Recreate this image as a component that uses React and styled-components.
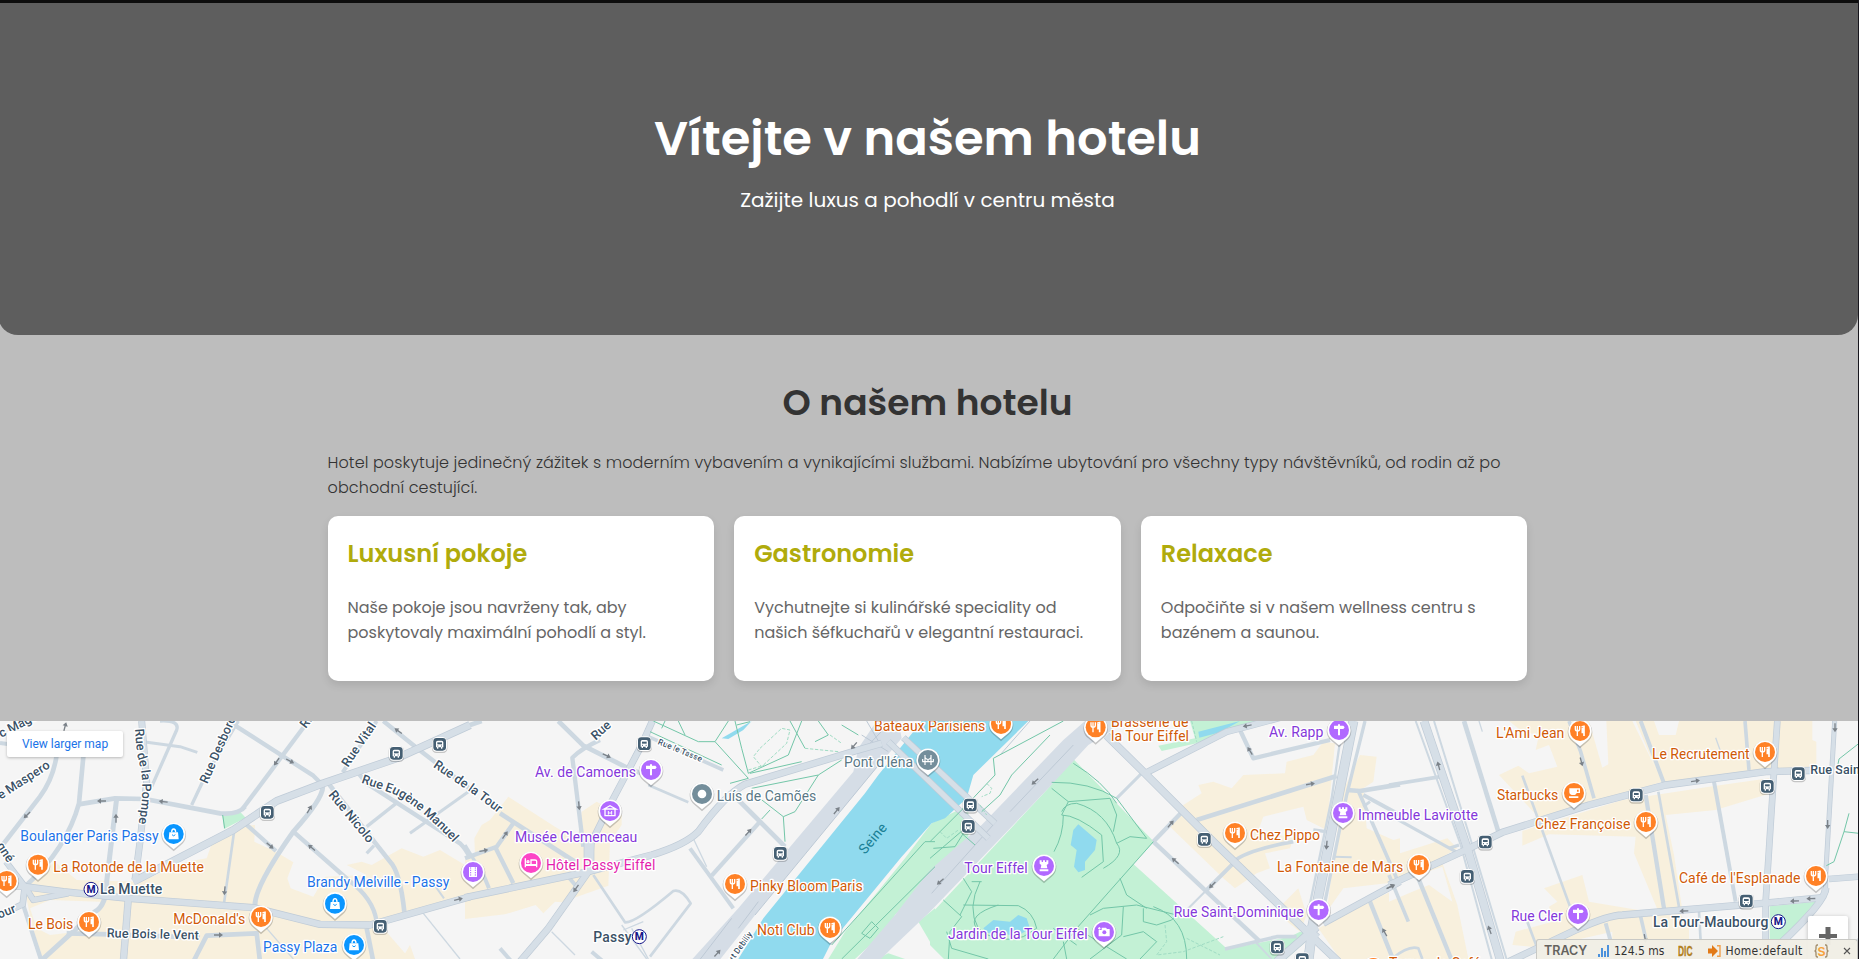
import React from "react";
import styled, { createGlobalStyle } from "styled-components";

const GlobalStyle = createGlobalStyle`
  * { box-sizing: border-box; }
  html, body { margin: 0; height: 959px; overflow: hidden; background: #17161d; }
  body { font-family: Poppins, Inter, sans-serif; color: #333; }
  h1, h2, h3, p { margin: 0; }
`;

const Page = styled.div`
  width: 1858px;
  height: 959px;
  overflow: hidden;
  background: #bdbdbd;
  border-top: 3px solid #0d0d0d;
  position: relative;
`;

const Hero = styled.header`
  width: 1860px;
  height: 332px;
  margin-left: -2.5px;
  padding-top: 100px;
  border-radius: 0 0 20px 20px;
  background: #5e5e5e;
  color: #fff;
  text-align: center;
`;

const HeroTitle = styled.h1`
  font-size: 48px;
  font-weight: 600;
  line-height: 72px;
`;

const HeroText = styled.p`
  margin-top: 10px;
  font-size: 20px;
  line-height: 30px;
`;

const About = styled.section`
  width: 1200px;
  height: 386px;
  margin: 0 auto 0 327.5px;
  padding-top: 40px;
`;

const AboutTitle = styled.h2`
  font-size: 36px;
  font-weight: 600;
  line-height: 56px;
  text-align: center;
`;

const AboutText = styled.p`
  margin-top: 19px;
  font-size: 16px;
  font-weight: 300;
  line-height: 25.3px;
  letter-spacing: 0.105px;
  white-space: nowrap;
`;

const CardGrid = styled.div`
  display: grid;
  grid-template-columns: repeat(3, 1fr);
  gap: 20px;
  margin-top: 15px;
`;

const Card = styled.article`
  height: 165px;
  padding: 20px;
  border-radius: 10px;
  background: #fff;
  box-shadow: 0 4px 8px rgba(0, 0, 0, 0.1);
`;

const CardTitle = styled.h3`
  font-size: 24px;
  font-weight: 600;
  line-height: 36px;
  color: #b0ab0c;
`;

const CardLine = styled.span`
  display: block;
`;

const CardText = styled.p`
  margin-top: 23px;
  font-size: 16px;
  line-height: 25px;
  color: #666;
  white-space: nowrap;
`;

const MapFrame = styled.section`
  position: relative;
  height: 238px;
  overflow: hidden;
  background: #f5f5f5;
`;

const MapCanvas = styled.svg`
  display: block;
  font-family: Roboto, sans-serif;
`;

const LargerMap = styled.a`
  position: absolute;
  left: 7px;
  top: 10px;
  width: 116px;
  height: 26px;
  border-radius: 2px;
  background: #fff;
  box-shadow: 0 1px 3px rgba(0, 0, 0, 0.25);
  color: #1a73e8;
  font: 12px/26px Roboto, sans-serif;
  text-align: center;
`;

const ZoomIn = styled.button`
  position: absolute;
  right: 10px;
  top: 195px;
  display: flex;
  align-items: flex-start;
  width: 40px;
  height: 60px;
  padding: 11px 0 0 11px;
  border: 0;
  border-radius: 2px;
  background: #fff;
  box-shadow: 0 1px 4px rgba(0, 0, 0, 0.25);
`;

const TracyBar = styled.aside`
  position: absolute;
  right: 0;
  bottom: 0;
  display: flex;
  align-items: center;
  width: 322px;
  height: 20px;
  padding: 2px 0 0 7px;
  border: 1px solid #c9c9c5;
  border-bottom: 0;
  border-radius: 3px 3px 0 0;
  background: rgba(240, 238, 229, 0.96);
  color: #333;
  font: 12px/16px "DejaVu Sans Condensed", "DejaVu Sans", sans-serif;
  white-space: nowrap;
`;

const TracyItem = styled.span`
  display: flex;
  align-items: center;
  gap: 4px;
  width: ${(p) => p.$width}px;
  letter-spacing: ${(p) => p.$track || 0}px;
`;

const TracyLogo = styled(TracyItem)`
  color: #65635e;
  font: 600 12.5px/16px Inter, sans-serif;
`;

const TracyBadge = styled(TracyItem)`
  color: #b3811f;
  font: 700 15px/16px "Liberation Sans", sans-serif;

  b {
    transform: scaleX(0.56);
    transform-origin: left;
    -webkit-text-stroke: 0.4px #b3811f;
  }
`;

const cards = [
  { title: "Luxusní pokoje", lines: ["Naše pokoje jsou navrženy tak, aby", "poskytovaly maximální pohodlí a styl."] },
  { title: "Gastronomie", lines: ["Vychutnejte si kulinářské speciality od", "našich šéfkuchařů v elegantní restauraci."] },
  { title: "Relaxace", lines: ["Odpočiňte si v našem wellness centru s", "bazénem a saunou."] },
];

/* The map is drawn in thirds of a pixel, in four neighbouring tiles. */
const tiles = [
  {
    x: 0,
    built: [
      "M75 530L95 495L165 440L230 495L420 500L560 440L620 430L640 372L690 335L765 330L763 380L830 412L880 442L862 490L872 520L940 545L975 485L1100 480L1040 450L1085 440L1115 450L1205 400L1270 425L1320 405L1395 450V560L1150 610L1150 640L1215 715L1230 732H120L90 600Z",
      "M1205 732L1230 690L1245 732Z",
    ],
    gaps: ["M90 580L150 555L300 560L290 620L230 650L150 660L110 640Z"],
    green: ["M667 298L720 290L737 308L672 342Z"],
    water: [],
    minor: [
      ["M170 120Q160 190 120 245L0 400", 14], ["M250 125L237 265Q200 400 80 510", 14],
      ["M235 268L345 250L435 252L660 295Q715 300 735 275", 14], ["M350 250L320 500Q320 570 285 590L120 740", 15],
      ["M68 565L125 740", 13], ["M725 285L925 18", 13], ["M695 25L940 182L968 210", 13],
      ["M430 80L540 95L592 112", 9], ["M480 18Q540 15 530 45L455 215", 10], ["M575 270L615 185L715 18", 10],
      ["M735 325L828 408", 13], ["M968 215Q970 250 880 350Q760 520 765 575", 15],
      ["M880 350L1045 495Q1120 550 1130 620", 13], ["M1100 640L1120 740", 14],
      ["M985 205L1170 440Q1200 470 1213 590", 14], ["M1122 392L1100 415", 10],
      ["M1078 178L1100 205L1380 385Q1400 405 1410 430", 13], ["M1150 18L1262 108L1410 222", 13],
      ["M1028 172L1130 18", 12], ["M1195 260L1100 335", 10], ["M1405 230L1230 355", 9],
      ["M703 345L672 565", 8], ["M580 740L620 662L770 655L780 740", 14], ["M200 655L330 658L600 668", 14],
      ["M0 84L22 87", 12], ["M1300 505L1332 550", 6], ["M800 640L880 732", 4], ["M1270 595L1380 732", 4],
    ],
    major: [
      ["M18 440L75 515L100 555L205 535", 17], ["M75 510L68 568L0 600", 18], ["M0 510L75 515L190 530L385 550L760 578L960 628L1110 630L1410 545", 20],
      ["M385 550L370 740", 20], ["M405 495L420 380L440 200L425 18", 19], ["M400 500L700 345L830 258L970 205L1190 130L1410 30", 22],
    ],
    avenues: [],
    rails: [],
    paths: ["M668 300L674 340"],
    dashed: [],
    arrows: [[195, 35, -75], [81, 300, 135], [305, 258, 180], [490, 260, 187], [348, 310, -90], [830, 140, 125], [870, 138, 28], [928, 283, -60], [810, 392, 40], [935, 398, 220], [674, 527, 95], [655, 660, 0], [1195, 48, 215], [1375, 553, -15]],
  },
  {
    x: 1395,
    built: ["M0 435L30 420L28 370L50 330L75 315L130 245L270 335L320 365L340 360L350 290L395 260L470 300L470 330L435 380L430 512L290 562L270 560L235 595L212 570L120 598L0 612Z"],
    gaps: [],
    green: ["M1090 732L1140 650L1320 430L1400 325L1510 270V365L1290 600L1270 640L1170 732Z", "M1360 620L1410 580V690L1395 680Z", "M1235 732L1270 715L1320 732Z"],
    water: ["M815 740L895 610L1200 235L1240 180L1345 50L1370 18H1690L1525 180L1505 250L1440 310L1400 325L1310 425L1100 680L1070 740Z", "M770 70L860 18L835 45L790 72Z"],
    minor: [
      ["M0 35L50 18", 14], ["M280 18L355 92L490 160L530 175", 14], ["M405 75Q350 100 322 128L355 395", 13],
      ["M550 65L775 165", 11], ["M550 210L670 262", 8], ["M105 295L330 440", 14], ["M0 430L95 395L145 325", 13],
      ["M90 395L145 505", 13], ["M45 455L72 520", 12], ["M310 485L335 515", 12], ["M0 390L30 440", 10],
      ["M385 480L480 622Q510 625 625 528Q650 520 677 565L555 725", 8], ["M675 400L805 580", 12], ["M740 482L885 320", 13],
      ["M820 255L960 395", 14], ["M105 700L140 740", 12], ["M380 710L415 740", 12], ["M260 650L330 720", 4],
      ["M680 360L725 455", 4], ["M470 630L545 732M500 640L550 732M475 645L535 620", 4],
    ],
    major: [
      ["M562 18L530 90L440 260L378 385L372 470", 19], ["M372 375V470", 30], ["M370 470L250 640L165 740", 20],
      ["M0 548L370 470L560 420Q660 390 700 350Q780 240 840 208L1180 105L1250 85", 20],
    ],
    avenues: ["M675 740L820 580L1165 170L1180 100L1235 18H1300L1310 70L1200 200L890 575L760 740Z", "M1170 740L1290 600L1395 465L1550 330L1795 75L1860 18H1960L1935 50L1870 90L1745 225L1395 590L1280 700L1240 740Z"],
    rails: ["M1245 145L870 600", "M880 560L820 640M800 610L700 740", "M1250 95L1205 18M1210 90L1280 18M1190 60L1270 110"],
    paths: [
      "M565 18L700 80L750 80L790 18M555 50L770 150M600 18L590 40M640 18L660 60M750 80L850 190L795 205M810 18L830 100L850 175L970 120L1010 18M815 30L855 20M855 175L1010 140M860 220L1060 180L1130 135M1060 180L990 290L955 305L960 380M955 305L865 235M915 285L890 312M975 18L1020 100M1060 18L1090 60L1050 80M1130 30L1180 60",
      "M1410 380H1380L1100 690M1410 455L1130 732M1220 620L1240 640L1215 670L1190 655Z",
    ],
    dashed: ["M885 100L950 40L975 45L965 85L890 155L865 125Z", "M1020 100L1120 110", "M850 165L900 150", "M1095 60L1130 85"],
    arrows: [[425, 122, 25], [342, 272, 85], [120, 360, -55], [56, 407, -10], [850, 352, -48], [333, 520, 125], [1115, 287, -50], [757, 715, -48], [1167, 92, 130]],
  },
  {
    x: 2790,
    built: [
      "M720 335L760 270L815 235L805 210L850 200L905 220L940 180L1065 175L1070 140L1150 120L1180 80L1215 85L1190 345L1130 315L1120 275L1000 305L985 345L1090 370L1080 400L1005 415L1020 460L980 475L915 520L880 490Z",
      "M1290 120L1340 125L1330 200L1300 220L1310 340L1390 375L1410 370V500L1240 520L1190 590L1215 400L1240 225Z",
      "M1035 590L1105 520L1130 600L1110 650Z", "M1165 640L1410 515V732H1230Z",
    ],
    gaps: [],
    green: ["M0 600L350 225L430 132L672 380L610 447L895 705L870 740H50L0 690Z", "M890 702L1080 665L1110 650L1150 660L1060 740H865Z", "M780 18H985L920 45L800 85L695 108L685 92L795 70Z"],
    water: ["M805 50L930 18L870 52L808 68Z", "M445 328L500 375L495 405L465 440L465 465L445 472L432 455L440 405L422 390L430 345Z", "M160 640L190 615L240 620L265 600L290 610L300 640L260 665L200 650L170 655Z"],
    minor: [
      ["M800 315L1220 183", 14], ["M930 45L970 130L1200 75", 13], ["M670 380L755 292", 13], ["M670 380L990 680", 13],
      ["M640 170L560 250", 9], ["M915 440L830 525", 12], ["M830 525L770 585", 6], ["M910 440Q950 405 1090 380", 11],
      ["M1250 225L1290 228L1410 208", 14], ["M1285 228L1400 490", 11], ["M1300 240L1410 300", 12], ["M1300 275L1320 260", 9],
      ["M1320 560L1392 740", 13], ["M885 702L1040 665L1100 665", 11], ["M1210 425L1265 427", 6], ["M1150 345L1190 350", 10],
      ["M1230 80L1205 250L1135 590", 7], ["M1305 18L1250 240L1185 560", 10], ["M975 680L1025 732", 5],
    ],
    major: [
      ["M530 62L645 175L850 380L1120 640L1225 740", 22], ["M645 175L890 50L960 32L1060 5", 19], ["M1270 18L1230 220L1148 630L1135 740", 28],
      ["M1160 635L1040 740", 24], ["M1180 625L1410 500", 19], ["M1125 640L1160 670", 28], ["M1150 655L1130 740", 24],
    ],
    avenues: [],
    rails: ["M430 90L240 290M200 318L5 535", "M210 120L300 18"],
    paths: [
      "M400 18L190 130L195 180L110 270M360 60L245 180L210 240L155 290M0 380L120 260M0 430L105 340M10 400L75 395L100 355M95 355L135 390",
      "M365 202Q480 200 560 250L650 370L600 365L560 385M430 145Q520 200 560 265M365 220L415 260L540 250L560 300L550 350M415 260L395 300Q440 300 515 360L520 440L455 487M395 290Q405 265 440 265Q530 290 560 385Q590 420 520 460M400 300Q400 360 372 410",
      "M670 380L440 640L370 732M570 490L590 540L650 580M440 640L590 732M40 555L95 605L60 650L55 732M100 490L125 530L90 600M150 500Q110 580 145 640Q200 690 280 665L320 640Q310 590 265 572L100 570M140 640Q110 600 205 570M50 650L65 700L175 732M125 500H155",
      "M480 600L520 580L620 570L740 600L725 615L680 630L640 620V580M580 575L575 660L480 732M670 575Q770 610 770 732M370 640L440 690M580 665L640 650L680 680L630 732M410 732L400 680",
    ],
    dashed: ["M170 205L185 220L180 235L155 245M150 270L170 300", "M705 630L710 680L680 720L760 710L880 665M770 670L870 720", "M30 350L50 370L85 345", "M785 18L800 80"],
    arrows: [[315, 200, 138], [31, 500, 138], [952, 32, 170], [960, 108, 238], [1141, 207, -10], [722, 327, -50], [736, 438, 220], [847, 510, 135], [1190, 390, 95], [1381, 515, -28], [1364, 652, 240]],
  },
  {
    x: 4167,
    built: [
      "M360 18H730L770 100L820 200L620 262L435 325L442 300L400 255L330 180L388 152L420 175L505 155L480 90L440 105L450 60L400 50Z",
      "M740 18H1270V75L1282 80V158L820 210Z",
      "M400 348L700 255L960 215L1140 190L1145 235L980 285L830 300L855 420L880 585L810 595L735 415L740 365L480 358L400 392Z",
      "M465 520L580 480L600 560L780 590L640 640L475 700L370 690L380 650L490 620L480 575L505 560Z",
      "M0 425L175 370L205 400L155 430L205 570L240 740H0Z",
      "M520 660L730 605L870 590L900 640V680H530Z",
    ],
    gaps: ["M600 18H652L658 148L640 158Z", "M795 18H870L860 60L810 60Z", "M0 510L160 455L190 560L120 510L70 530L0 560Z", "M560 675L670 650V680Z"],
    green: ["M1142 574L1280 560L1180 675H1142Z"],
    water: [],
    minor: [
      ["M0 210L155 185", 11], ["M225 18L328 350", 14], ["M20 310L200 410", 10], ["M540 18L575 110L615 250", 11],
      ["M755 18L825 205", 12], ["M1068 18L1080 165", 11], ["M975 200L1040 560", 12], ["M770 240L825 580", 13],
      ["M808 230L870 575", 8], ["M400 182L545 580", 8], ["M88 490L190 740", 13], ["M0 480L58 620", 11],
      ["M650 625L680 732", 12], ["M755 605L770 670", 11], ["M930 590L935 680", 8], ["M415 620L445 700", 8],
      ["M10 730Q60 690 88 700L100 732", 8], ["M270 18L280 50", 4], ["M980 68L995 110", 4], ["M1180 675L1290 560", 5],
      ["M80 18L215 390L310 740M135 18L250 390L355 740", 6], ["M180 400L210 390", 10], ["M1410 670L1390 690", 6],
    ],
    major: [
      ["M0 510L230 405L340 352L600 270L830 210L1130 170L1320 165", 20], ["M105 18L235 400L335 740", 24],
      ["M360 740L560 645Q660 600 700 600L1120 565L1300 548", 20], ["M1165 18L1155 170L1130 560V690", 18],
      ["M1337 18L1310 480V530Q1300 560 1180 680", 13], ["M1310 520Q1310 560 1170 690", 21], ["M1320 492L1410 485", 18],
    ],
    avenues: [],
    rails: [],
    paths: ["M1410 85L1350 132L1345 158M1380 295L1365 350L1410 355M1365 350L1335 440L1312 452"],
    dashed: [],
    arrows: [[149, 153, -105], [577, 140, 75], [919, 198, -8], [1338, 38, 90], [1316, 328, 90], [885, 588, 178], [1217, 558, 178], [1266, 551, 178], [302, 645, 250], [6, 515, -25], [768, 670, 80]],
  },
];

const tones = {
  food: ["#ff8126", "#d05a08"],
  shop: ["#0a96ff", "#1b72e8"],
  sight: ["#b169ff", "#8438da"],
  hotel: ["#fc45c6", "#e31fad"],
  civic: ["#748e9b", "#5a7886"],
};

/* x, y, tone, glyph */
const pins = [
  [521, 357, "shop", "bag"], [114, 449, "food", "fork"], [20, 498, "food", "fork"], [267, 621, "food", "fork"],
  [783, 606, "food", "fork"], [1005, 566, "shop", "bag"], [1062, 690, "shop", "bag"], [1419, 471, "sight", "film"],
  [1953, 165, "sight", "sign"], [1830, 288, "sight", "museum"], [1593, 444, "hotel", "bed"], [2106, 237, "civic", "dot"],
  [2205, 507, "food", "fork"], [2490, 639, "food", "fork"], [2784, 135, "civic", "bridge"], [3003, 27, "food", "fork"],
  [3287, 37, "food", "fork"], [4017, 45, "sight", "sign"], [4029, 294, "sight", "rook"], [3705, 354, "food", "fork"],
  [3132, 453, "sight", "rook"], [3312, 651, "sight", "camera"], [3956, 585, "sight", "sign"], [4740, 48, "food", "fork"],
  [5295, 111, "food", "fork"], [4722, 234, "food", "cup"], [4938, 321, "food", "fork"], [4257, 450, "food", "fork"],
  [5448, 483, "food", "fork"], [4734, 597, "sight", "sign"], [4120, 759, "food", "fork"],
];

/* x, baseline, width, text, tone */
const places = [
  [61, 379, 415, "Boulanger Paris Passy", "shop"], [160, 472, 452, "La Rotonde de la Muette", "food"],
  [84, 642, 136, "Le Bois", "food"], [520, 627, 216, "McDonald's", "food"],
  [921, 516, 427, "Brandy Melville - Passy", "shop"], [789, 711, 223, "Passy Plaza", "shop"],
  [1605, 187, 303, "Av. de Camoens", "sight"], [1545, 381, 367, "Musée Clemenceau", "sight"],
  [1638, 465, 328, "Hôtel Passy Eiffel", "hotel"], [2150, 258, 299, "Luís de Camões", "civic"],
  [2250, 528, 338, "Pinky Bloom Paris", "food"], [2271, 660, 173, "Noti Club", "food"],
  [2532, 156, 207, "Pont d'Iéna", "civic"], [2622, 48, 334, "Bateaux Parisiens", "food"],
  [3333, 36, 232, "Brasserie de", "food"], [3333, 78, 234, "la Tour Eiffel", "food"],
  [3807, 66, 163, "Av. Rapp", "sight"], [3750, 375, 210, "Chez Pippo", "food"],
  [4074, 315, 360, "Immeuble Lavirotte", "sight"], [2893, 474, 190, "Tour Eiffel", "sight"],
  [2844, 672, 419, "Jardin de la Tour Eiffel", "sight"], [3521, 606, 390, "Rue Saint-Dominique", "sight"],
  [3831, 471, 379, "La Fontaine de Mars", "food"], [4488, 69, 205, "L'Ami Jean", "food"],
  [4956, 132, 293, "Le Recrutement", "food"], [4491, 255, 184, "Starbucks", "food"],
  [4605, 342, 286, "Chez Françoise", "food"], [5037, 504, 364, "Café de l'Esplanade", "food"],
  [4533, 618, 155, "Rue Cler", "sight"], [4167, 759, 274, "Terres de Café", "food"],
];

const stations = [[300, 538, 187, "La Muette", 273, 523], [1780, 680, 115, "Passy", 1918, 665], [4959, 636, 346, "La Tour-Maubourg", 5335, 620]];

/* baseline path, text, size */
const streets = [
  ["M405 42L411 120Q440 200 415 330L405 400", "Rue de la Pompe", 38],
  ["M622 208L730 -40", "Rue Desbordes", 38],
  ["M1044 158L1160 -12", "Rue Vital", 38],
  ["M1083 203L1180 236Q1260 275 1362 385L1450 480", "Rue Eugène Manuel", 38],
  ["M984 240L1176 472", "Rue Nicolo", 39],
  ["M1298 155L1420 238L1600 374", "Rue de la Tour", 38],
  ["M320 667L660 675", "Rue Bois le Vent", 38],
  ["M2 254L220 113", "e Maspero", 38],
  ["M4 68L200 -30", "c Magda", 38],
  ["M-12 392L60 500", "gné", 38],
  ["M-2 611L110 567", "our", 38],
  ["M917 42L1000 -64", "Rue", 38],
  ["M1787 77L1940 -60", "Rue", 38],
  ["M1972 87L2200 181", "Rue le Tasse", 25],
  ["M2182 762L2330 560", "Port Debilly", 25],
  ["M5431 178H6000", "Rue Saint-Dominique", 38],
];

const stops = [[802, 293], [1189, 116], [1319, 89], [1141, 635], [1933, 87], [2341, 416], [2911, 271], [2905, 335], [3613, 374], [3832, 697], [3907, 735], [4909, 241], [5395, 177], [5302, 215], [4456, 382], [4402, 485], [5239, 559]];

const glyphs = {
  fork: <g fill="none" stroke="#fff" strokeWidth="4"><path d="M-14 -15V-6Q-14 0 -8 0Q-1 0 -1 -6V-15M-8 -15V15" /><path d="M6 -11Q6 -14 12 -14V15M7 -10V4H12" strokeWidth="5" /></g>,
  bag: <g><path d="M-13 -5H13L15 16H-15Z" fill="#fff" /><path d="M-6 -5Q-6 -15 0 -15Q6 -15 6 -5" fill="none" stroke="#fff" strokeWidth="4" /><path d="M-5 2Q0 9 5 2" fill="none" stroke="#0a96ff" strokeWidth="3" /></g>,
  sign: <path d="M-3 -17H3V-13H13L17 -8L13 -3H3V16H-3V-3H-15V-13H-3Z" fill="#fff" />,
  museum: <g fill="none" stroke="#fff" strokeWidth="4"><path d="M-18 -6L0 -16L18 -6ZM-15 -5V14H15V-5" /><path d="M-5 11V0M5 11V0M-5 6H5" strokeWidth="3" /></g>,
  bed: <g fill="none" stroke="#fff" strokeWidth="4"><path d="M-17 -14V13M-17 7H17V13M-17 -1V5H17V-5Q17 -9 12 -9H0V4" /><circle cx="-9" cy="-4" r="3" /></g>,
  dot: <circle r="13" fill="#fff" />,
  bridge: <path d="M-9 -15V15M9 -15V15M-17 5H17M-16 5V-3M16 5V-3M-9 -7Q0 4 9 -7M0 -2V5" fill="none" stroke="#fff" strokeWidth="3.5" />,
  rook: <path d="M-13 -17H-7V-12H-3V-17H3V-12H7V-17H13V-7L8 -3L10 7H-10L-8 -3L-13 -7ZM-13 10H13V16H-13Z" fill="#fff" />,
  camera: <g><path d="M-16 -6H-7V-13H6L9 -9H17V13H-16Z" fill="#fff" /><circle cx="1" cy="1" r="6" fill="#b169ff" /><path d="M-14 -15V-7M-18 -11H-10" stroke="#fff" strokeWidth="3" /></g>,
  cup: <path d="M-14 -14H18V0H8Q7 5 2 6H-7Q-14 5 -14 -2ZM9 -10V-4H14V-10ZM-15 10H13V15H-15Z" fill="#fff" fillRule="evenodd" />,
  film: <g><path d="M-12 -15H12V15H-12Z" fill="#fff" /><path d="M-7 -14V14M7 -14V14" stroke="#b169ff" strokeWidth="3" strokeDasharray="4 3" /></g>,
};

const Layer = ({ draw }) => tiles.map((t) => <g key={t.x} transform={`translate(${t.x} 0)`}>{draw(t)}</g>);
const fill = (list, color) => list.map((d) => <path key={d} d={d} fill={color} />);
const line = (list, color, extra = 0) =>
  list.map(([d, w]) => <path key={d} d={d} fill="none" stroke={color} strokeWidth={w + extra} strokeLinejoin="round" />);

const Pin = ({ x, y, tone, glyph }) => (
  <g transform={`translate(${x} ${y})`}>
    <path d="M0 50L-22 31A37 37 0 1 1 22 31Z" fill="#000" opacity=".2" transform="translate(0 2)" />
    <path d="M0 46L-20 29A35 35 0 1 1 20 29Z" fill="#fff" />
    <circle r="30" fill={tones[tone][0]} />
    {glyphs[glyph]}
  </g>
);

const Stop = ({ x, y }) => (
  <g transform={`translate(${x} ${y})`}>
    <rect x="-23" y="-22" width="46" height="47" rx="13" fill="#000" opacity=".2" />
    <rect x="-22" y="-23" width="44" height="44" rx="13" fill="#fff" />
    <rect x="-19" y="-20" width="38" height="38" rx="10" fill="#455f73" />
    <path d="M-11 8V-7Q-11 -12 -6 -12H6Q11 -12 11 -7V8H8V12H4V8H-4V12H-8V8Z" fill="#fff" />
    <path d="M-7 -7H7V-1H-7Z" fill="#455f73" />
    <path d="M-7 4H-4M4 4H7" stroke="#455f73" strokeWidth="3" />
  </g>
);

const halo = { stroke: "#fff", strokeWidth: 8, strokeLinejoin: "round", paintOrder: "stroke" };

const CityMap = () => (
  <MapCanvas width="1858" height="238" viewBox="0 18 5574 714">
    <Layer draw={(t) => fill(t.built, "#f8f0dd")} />
    <Layer draw={(t) => fill(t.gaps, "#f5f5f5")} />
    <Layer draw={(t) => fill(t.green, "#c3f1d5")} />
    <Layer draw={(t) => fill(t.water, "#90daee")} />
    <Layer draw={(t) => line(t.minor, "#cdd8e1")} />
    <Layer draw={(t) => fill(t.avenues, "#d5dde6")} />
    <Layer draw={(t) => line(t.rails.map((d) => [d, 3]), "#bdc9d5")} />
    <Layer draw={(t) => line(t.major, "#bfcbd7", 2)} />
    <Layer draw={(t) => line(t.major, "#d6dfe7", -2)} />
    <path d="M2665 80L2965 370M2710 68L2985 325" fill="none" stroke="#bfcbd7" strokeWidth="20" />
    <path d="M2665 80L2965 370M2710 68L2985 325" fill="none" stroke="#d6dfe7" strokeWidth="16" />
    <Layer draw={(t) => line(t.paths.map((d) => [d, 3]), "#73c6a8")} />
    <Layer draw={(t) => t.dashed.map((d) => <path key={d} d={d} fill="none" stroke="#a0dcc4" strokeWidth="3" strokeDasharray="10 5" />)} />
    <Layer
      draw={(t) => t.arrows.map(([x, y, a]) => (
        <path key={`${x}-${y}`} transform={`translate(${x} ${y}) rotate(${a})`} d="M-13 -2H2V-8L14 0L2 8V2H-13Z" fill="#7b8289" />
      ))}
    />
    <g fill="#3a5166" fontWeight="500">
      {streets.map(([d, text, size], i) => (
        <g key={d}>
          <path id={`street-${i}`} d={d} fill="none" />
          <text fontSize={size} {...halo}><textPath href={`#street-${i}`}>{text}</textPath></text>
        </g>
      ))}
    </g>
    {stops.map(([x, y]) => <Stop key={`${x}-${y}`} x={x} y={y} />)}
    {stations.map(([x, y, w, text, mx, my]) => (
      <g key={text}>
        <text x={x} y={y} textLength={w} fontSize="42" fontWeight="500" fill="#3a5166" {...halo}>{text}</text>
        <circle cx={mx} cy={my} r="21" fill="#fff" stroke="#17178a" strokeWidth="3" />
        <text x={mx} y={my + 11} textAnchor="middle" fontSize="31" fontWeight="800" fill="#17178a">M</text>
      </g>
    ))}
    <text transform="translate(2595 420) rotate(-50)" textLength="106" fontSize="42" fill="#1a8095">Seine</text>
    {pins.map(([x, y, tone, glyph]) => <Pin key={`${x}-${y}`} x={x} y={y} tone={tone} glyph={glyph} />)}
    {places.map(([x, y, w, text, tone]) => (
      <text key={text} x={x} y={y} textLength={w} fontSize="42" fill={tones[tone][1]} {...halo}>{text}</text>
    ))}
  </MapCanvas>
);

export default function App() {
  return (
    <>
      <GlobalStyle />
      <Page>
        <Hero>
          <HeroTitle>Vítejte v našem hotelu</HeroTitle>
          <HeroText>Zažijte luxus a pohodlí v centru města</HeroText>
        </Hero>
        <About>
          <AboutTitle>O našem hotelu</AboutTitle>
          <AboutText>
            Hotel poskytuje jedinečný zážitek s moderním vybavením a vynikajícími službami. Nabízíme ubytování pro všechny typy návštěvníků, od rodin až po
            <br />
            obchodní cestující.
          </AboutText>
          <CardGrid>
            {cards.map((card) => (
              <Card key={card.title}>
                <CardTitle>{card.title}</CardTitle>
                <CardText>
                  {card.lines.map((text) => <CardLine key={text}>{text}</CardLine>)}
                </CardText>
              </Card>
            ))}
          </CardGrid>
        </About>
        <MapFrame>
          <CityMap />
          <LargerMap>View larger map</LargerMap>
          <ZoomIn aria-label="Zoom in">
            <svg width="18" height="18"><path d="M6.5 0H11.5V7H18V11H11.5V18H6.5V11H0V7H6.5Z" fill="#666" /></svg>
          </ZoomIn>
        </MapFrame>
        <TracyBar>
          <TracyLogo $width={54}>TRACY</TracyLogo>
          <TracyItem $width={79.5}>
            <svg width="12" height="12" fill="#4c91dc"><path d="M0 9H2V12H0ZM3 3H5V12H3ZM6 6H8V12H6ZM9 0H11V12H9Z" /></svg>
            124.5 ms
          </TracyItem>
          <TracyBadge $width={30}><b>DIC</b></TracyBadge>
          <TracyItem $width={106} $track={0.29}>
            <svg width="14" height="12"><path d="M0 3.5H4V0L10 6L4 12V8.5H0Z" fill="#e27a16" /><path d="M9 .8H12V11.2H9" fill="none" stroke="#f0a04c" strokeWidth="1.4" /></svg>
            Home:default
          </TracyItem>
          <TracyItem $width={29}>
            <svg width="15" height="14" fontFamily="Liberation Sans, sans-serif" fontWeight="700">
              <path d="M4 1H3Q2 1 2 3V5Q2 7 0.5 7Q2 7 2 9V11Q2 13 3 13H4M11 1H12Q13 1 13 3V5Q13 7 14.5 7Q13 7 13 9V11Q13 13 12 13H11" fill="none" stroke="#a08a68" strokeWidth="1.3" />
              <text x="7.5" y="11.5" textAnchor="middle" fontSize="12" fill="#f7a23b">S</text>
            </svg>
          </TracyItem>
          <svg width="8" height="8"><path d="M1 1L7 7M7 1L1 7" stroke="#555" strokeWidth="1.1" /></svg>
        </TracyBar>
      </Page>
    </>
  );
}
